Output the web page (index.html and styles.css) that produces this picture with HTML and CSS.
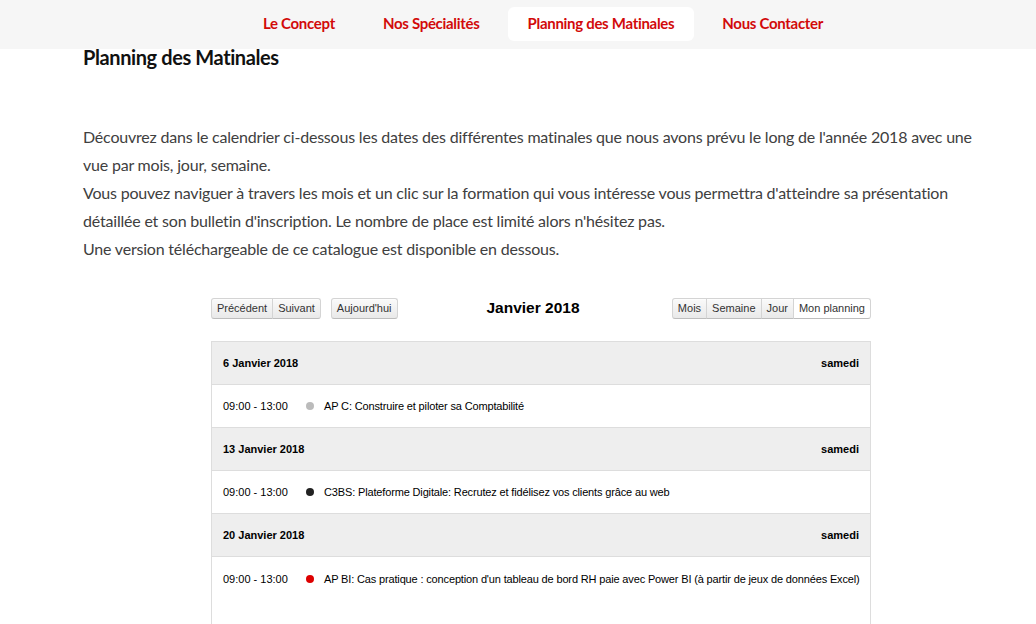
FILE: index.html
```html
<!DOCTYPE html>
<html lang="fr">
<head>
<meta charset="utf-8">
<title>Planning des Matinales</title>
<link rel="stylesheet" href="styles.css">
</head>
<body>
<nav class="topnav">
  <a class="nav-item" href="#">Le Concept</a>
  <a class="nav-item" href="#">Nos Spécialités</a>
  <a class="nav-item active" href="#">Planning des Matinales</a>
  <a class="nav-item" href="#">Nous Contacter</a>
</nav>
<main class="content">
  <h1 class="title">Planning des Matinales</h1>
  <p class="intro">Découvrez dans le calendrier ci-dessous les dates des différentes matinales que nous avons prévu le long de l'année 2018 avec une vue par mois, jour, semaine.<br>Vous pouvez naviguer à travers les mois et un clic sur la formation qui vous intéresse vous permettra d'atteindre sa présentation détaillée et son bulletin d'inscription. Le nombre de place est limité alors n'hésitez pas.<br>Une version téléchargeable de ce catalogue est disponible en dessous.</p>

  <section class="calendar">
    <div class="toolbar">
      <div class="tb-left">
        <div class="btn-group">
          <button class="btn first">Précédent</button><button class="btn last">Suivant</button>
        </div>
        <button class="btn single">Aujourd'hui</button>
      </div>
      <h2 class="cal-title">Janvier 2018</h2>
      <div class="tb-right">
        <div class="btn-group">
          <button class="btn first">Mois</button><button class="btn">Semaine</button><button class="btn">Jour</button><button class="btn last on">Mon planning</button>
        </div>
      </div>
    </div>
    <div class="list">
      <div class="day-head"><span>6 Janvier 2018</span><span>samedi</span></div>
      <div class="event"><span class="time">09:00 - 13:00</span><span class="dot grey"></span><span class="ev-title">AP C: Construire et piloter sa Comptabilité</span></div>
      <div class="day-head"><span>13 Janvier 2018</span><span>samedi</span></div>
      <div class="event"><span class="time">09:00 - 13:00</span><span class="dot black"></span><span class="ev-title">C3BS: Plateforme Digitale: Recrutez et fidélisez vos clients grâce au web</span></div>
      <div class="day-head"><span>20 Janvier 2018</span><span>samedi</span></div>
      <div class="event last-event"><span class="time">09:00 - 13:00</span><span class="dot red"></span><span class="ev-title">AP BI: Cas pratique : conception d'un tableau de bord RH paie avec Power BI (à partir de jeux de données Excel)</span></div>
      <div class="filler"></div>
    </div>
  </section>
</main>
</body>
</html>
```
FILE: styles.css
```css
* { box-sizing: border-box; }
html, body { margin: 0; padding: 0; background: #fff; }
body { font-family: Lato, "Open Sans", sans-serif; color: #333; overflow: hidden; height: 624px; }

.topnav {
  height: 49px;
  background: #f6f6f6;
  display: flex;
  justify-content: center;
  align-items: center;
  gap: 8px;
  padding-left: 50px;
  padding-bottom: 1px;
}
.nav-item {
  display: block;
  padding: 0 20px;
  height: 34px;
  line-height: 33px;
  border-radius: 6px;
  color: #d20a0a;
  text-decoration: none;
  font-size: 15px;
  font-weight: 700;
  letter-spacing: -0.3px;
}
.nav-item.active { background: #fff; }

.content { padding-left: 83px; width: 999px; }
.title {
  margin: -4px 0 0;
  font-size: 20px;
  font-weight: 700;
  color: #111;
  letter-spacing: -0.4px;
  line-height: 24px;
}
.intro {
  margin: 54px 0 0;
  font-size: 16px;
  line-height: 28px;
  font-weight: 400;
  color: #404040;
  letter-spacing: -0.2px;
}

.calendar {
  width: 660px;
  margin: 35px auto 0;
  font-family: "Liberation Sans", Arial, sans-serif;
}
.toolbar {
  display: flex;
  align-items: center;
  justify-content: space-between;
  height: 20px;
}
.tb-left { display: flex; gap: 10px; width: 230px; }
.tb-right { display: flex; justify-content: flex-end; width: 230px; }
.btn-group { display: flex; }
.btn {
  font-family: "Liberation Sans", Arial, sans-serif;
  font-size: 11px;
  height: 21px;
  padding: 0 5px;
  margin: 0;
  color: #333;
  background: linear-gradient(#fafafa, #e9e9e9);
  border: 1px solid #d4d4d4;
  border-bottom-color: #bdbdbd;
  border-radius: 0;
  box-shadow: inset 0 1px 0 rgba(255,255,255,.6);
}
.btn + .btn { margin-left: -1px; }
.btn.first { border-radius: 3px 0 0 3px; }
.btn.last { border-radius: 0 3px 3px 0; }
.btn.single { border-radius: 3px; }
.btn.on { background: #fff; }
.cal-title {
  margin: 0;
  font-size: 15.5px;
  font-weight: 700;
  color: #000;
  transform: translateX(-8px);
}

.list {
  margin-top: 23px;
  border: 1px solid #ddd;
  border-bottom: none;
  font-size: 11px;
  color: #000;
}
.day-head {
  display: flex;
  justify-content: space-between;
  align-items: center;
  height: 43px;
  padding: 0 11px;
  background: #eee;
  font-weight: 700;
  border-bottom: 1px solid #ddd;
}
.event {
  display: flex;
  align-items: center;
  height: 43px;
  padding: 0 11px;
  border-bottom: 1px solid #ddd;
  white-space: nowrap;
}
.event.last-event { border-bottom: none; }
.time { width: 83px; flex: none; }
.dot {
  width: 8px;
  height: 8px;
  border-radius: 50%;
  margin-right: 10px;
  flex: none;
}
.dot.grey { background: #bbb; }
.dot.black { background: #222; }
.dot.red { background: #d00; }
.ev-title { letter-spacing: -0.15px; }
.filler { height: 60px; }
```
